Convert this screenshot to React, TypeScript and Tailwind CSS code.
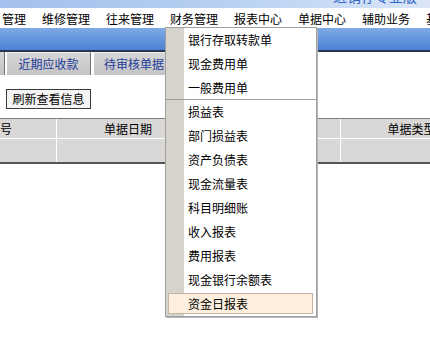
import React from 'react'

const topMenus = ['管理', '维修管理', '往来管理', '财务管理', '报表中心', '单据中心', '辅助业务', '基础资料']

const financeItems = [
  '银行存取转款单',
  '现金费用单',
  '一般费用单',
  '损益表',
  '部门损益表',
  '资产负债表',
  '现金流量表',
  '科目明细账',
  '收入报表',
  '费用报表',
  '现金银行余额表',
  '资金日报表',
]

const App: React.FC = () => {
  return (
    <div className="relative w-[430px] h-[341px] overflow-hidden bg-white font-['Noto_Sans_CJK_SC',sans-serif] text-[12px] text-black">
      {/* banner strip */}
      <div className="relative h-[8px] overflow-hidden bg-gradient-to-r from-[#a3c1ec] via-[#b6cff2] to-[#dbe7f8]">
        <span className="absolute left-[333px] top-[-11px] text-[14px] leading-[14px] text-[#2f66c9] whitespace-nowrap">
          进销存专业版
        </span>
      </div>

      {/* main menu */}
      <div className="flex h-[20px] items-center gap-[16px] pl-[2px] pt-[2px] bg-white whitespace-nowrap leading-[14px]">
        {topMenus.map((m) => (
          <span key={m} className="shrink-0">{m}</span>
        ))}
      </div>

      {/* blue band */}
      <div className="h-[22px] bg-gradient-to-b from-[#7fa9e6] to-[#4d82d4]" />
      <div className="h-[2px] bg-[#27364f]" />

      {/* tabs */}
      <div className="flex h-[23px] bg-white">
        <div className="w-[5px] bg-gradient-to-b from-[#d6d6d6] to-[#c3c3c3] border-r border-r-[#6f6f6f]" />
        <div className="ml-[1px] w-[85px] flex items-center justify-center bg-gradient-to-b from-[#d6d6d6] to-[#c4c4c4] border-l border-l-white border-r border-r-[#6f6f6f] border-t border-t-[#ececec] text-[#1d3b9b] leading-[14px]">
          近期应收款
        </div>
        <div className="ml-[2px] w-[80px] flex items-center pl-[10px] bg-gradient-to-b from-[#d6d6d6] to-[#c4c4c4] border-l border-l-white border-t border-t-[#ececec] text-[#1d3b9b] leading-[14px]">
          待审核单据
        </div>
      </div>

      {/* content */}
      <div className="pt-[14px]">
        <button className="ml-[6px] h-[20px] w-[85px] border border-[#3a3a3a] bg-[#f4f4f4] leading-[14px]">
          刷新查看信息
        </button>

        <div className="mt-[9px] w-[482px]">
          <div className="flex h-[21px] bg-[#d9d8d6] border-t border-t-[#7e7e7e] border-b border-b-white leading-[14px]">
            <div className="w-[57px] flex items-center border-r border-r-white">号</div>
            <div className="w-[143px] flex items-center justify-center border-r border-r-white">单据日期</div>
            <div className="w-[141px] flex items-center justify-center border-r border-r-white">单据编号</div>
            <div className="w-[141px] flex items-center justify-center">单据类型</div>
          </div>
          <div className="flex h-[25px] bg-[#d9d8d6] border-b-2 border-b-[#545454]">
            <div className="w-[57px] border-r border-r-white" />
            <div className="w-[143px] border-r border-r-white" />
            <div className="w-[141px] border-r border-r-white" />
            <div className="w-[141px]" />
          </div>
        </div>
      </div>

      {/* finance dropdown */}
      <div className="absolute left-[165px] top-[27px] w-[152px] border border-[#a0a0a0] bg-white shadow-[1px_1px_0_#b5b5b5]">
        {financeItems.map((item, i) => (
          <div
            key={item}
            className={
              'relative flex h-[24px] ' +
              (i === 2 ? 'border-b border-b-[#a0a0a0]' : '')
            }
          >
            {i === financeItems.length - 1 && (
              <div className="absolute left-[2px] right-[3px] top-[1px] bottom-[2px] border border-[#c4b49e] bg-[#fcefdd]" />
            )}
            <div className="w-[18px] shrink-0 bg-[#d6d3cd]" />
            <div className="relative flex items-center pl-[4px] leading-[14px] whitespace-nowrap">{item}</div>
          </div>
        ))}
      </div>
    </div>
  )
}

export default App
